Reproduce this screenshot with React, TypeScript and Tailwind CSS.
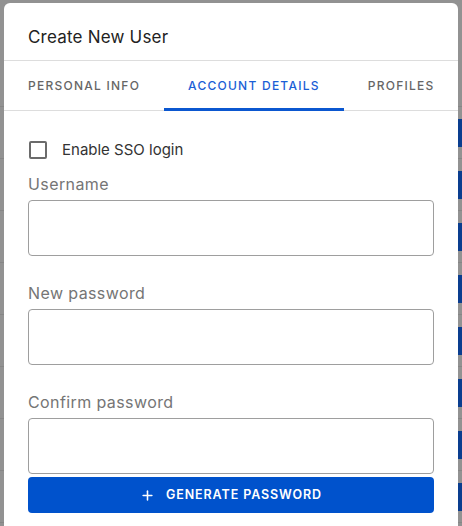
import { Plus } from 'lucide-react';

const rows = [0, 1, 2, 3, 4, 5, 6, 7, 8, 9];

function Field({ label, className }: { label: string; className?: string }) {
  return (
    <div className={className}>
      <div className="text-[16px] leading-[24px] text-[#757575] tracking-[0.4px]">{label}</div>
      <input
        type="text"
        className="mt-[4px] block h-[56px] w-full rounded-[4px] border border-[#9e9e9e] bg-white px-3 outline-none"
      />
    </div>
  );
}

export default function App() {
  return (
    <div className="relative h-[526px] w-[462px] overflow-hidden bg-[#929292]" style={{ fontFamily: 'Inter, "Noto Sans", sans-serif' }}>
      {/* page behind the backdrop */}
      <div className="flex flex-col pt-[106px]">
        {rows.map((r) => (
          <div key={r} className="flex h-[52px] items-center justify-end border-t border-[#868686]">
            <div className="h-[28px] w-[6px] rounded-l-[2px] bg-[#0a3d8f]" />
          </div>
        ))}
      </div>

      {/* modal */}
      <div className="absolute left-[4px] top-[3px] h-[540px] w-[454px] rounded-t-[6px] bg-white">
        <div className="flex h-[58px] items-end border-b border-[#dddddd] px-6 pb-[10px]">
          <h2 className="text-[17px] leading-[26px] font-normal text-[#222222] tracking-[0.2px]">Create New User</h2>
        </div>

        <div className="flex h-[50px] border-b border-[#dddddd]">
          <div className="flex shrink-0 items-center whitespace-nowrap px-6 text-[12px] font-medium uppercase tracking-[1.25px] text-[#666666]">
            Personal Info
          </div>
          <div className="relative flex shrink-0 items-center whitespace-nowrap px-6 text-[12px] font-medium uppercase tracking-[1.25px] text-[#1a5ed6]">
            Account Details
            <div className="absolute bottom-[-1px] left-0 right-0 h-[3px] bg-[#0b57d0]" />
          </div>
          <div className="flex shrink-0 items-center whitespace-nowrap px-6 text-[12px] font-medium uppercase tracking-[1.25px] text-[#666666]">
            Profiles
          </div>
        </div>

        <div className="px-6 pt-[27px]">
          <label className="flex h-[24px] items-center">
            <span className="ml-[1px] block h-[18px] w-[18px] rounded-[2px] border-2 border-[#6b6b6b]" />
            <span className="ml-[15px] text-[15px] text-[#333333]">Enable SSO login</span>
          </label>

          <Field label="Username" className="mt-[10px]" />
          <Field label="New password" className="mt-[25px]" />
          <Field label="Confirm password" className="mt-[25px]" />

          <button className="mt-[3px] flex h-[36px] w-full items-center justify-center gap-[11px] rounded-[4px] bg-[#0052cc] text-[12.5px] font-semibold uppercase tracking-[0.9px] text-white">
            <Plus className="h-[15px] w-[15px]" strokeWidth={2.5} />
            Generate Password
          </button>
        </div>
      </div>
    </div>
  );
}
